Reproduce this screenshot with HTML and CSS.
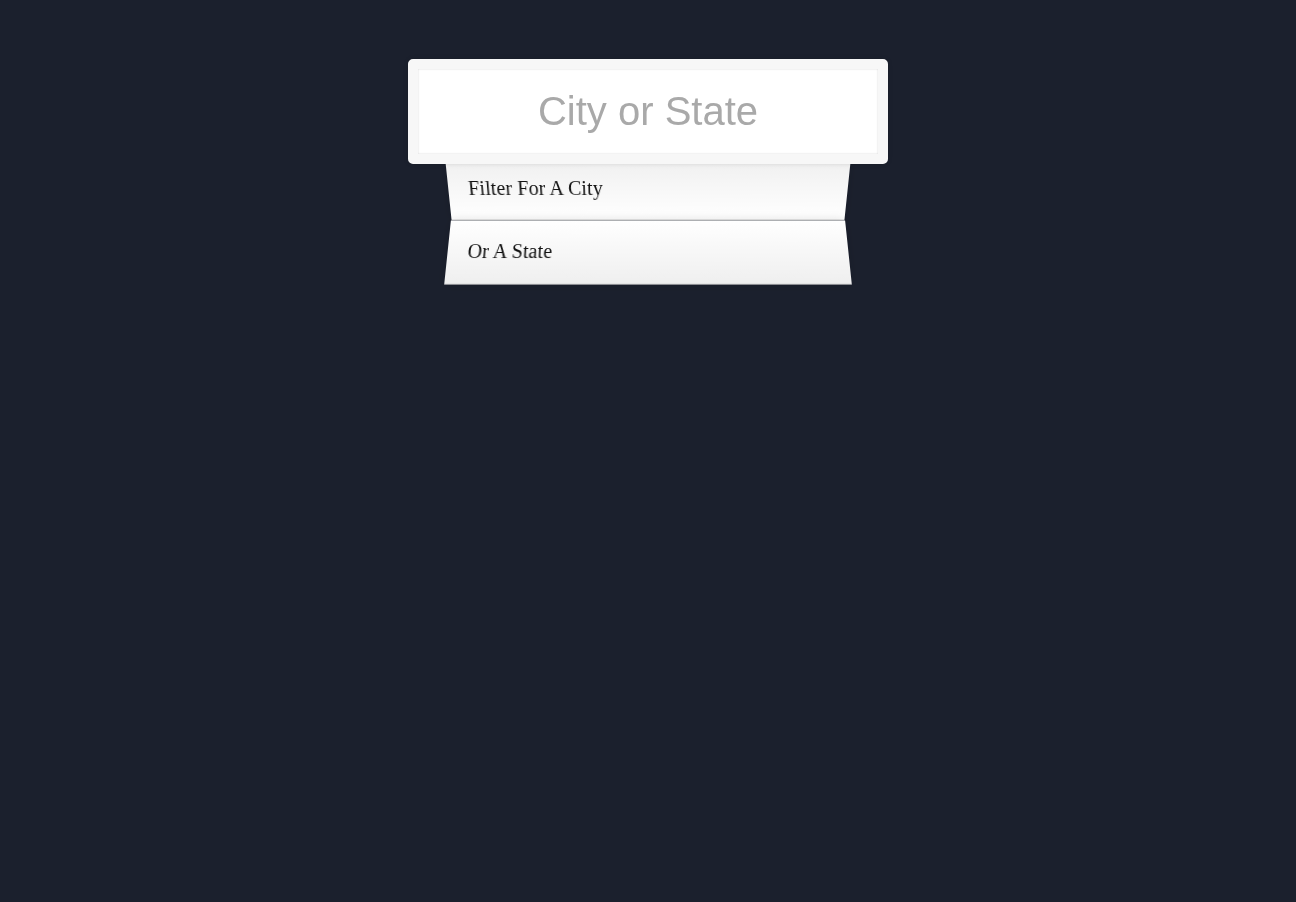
FILE: index.html
```html
<!DOCTYPE html>
<html lang="en">
<head>
<meta charset="UTF-8">
<title>Type Ahead</title>
<link rel="stylesheet" href="styles.css">
</head>
<body>
  <form class="search-form">
    <input type="text" class="search" placeholder="City or State">
    <ul class="suggestions">
      <li>Filter for a city</li>
      <li>or a state</li>
    </ul>
  </form>
</body>
</html>
```
FILE: styles.css
```css
html {
  box-sizing: border-box;
  background: #1b202d;
  font-family: "Liberation Serif", serif;
  font-size: 20px;
  font-weight: 200;
}
*, *:before, *:after {
  box-sizing: inherit;
}
body {
  margin: 8px;
}
.search-form {
  max-width: 400px;
  margin: 51px auto 50px;
}
.search {
  display: block;
  margin: 10px 0 -10px -40px;
  width: 480px;
  padding: 20px;
  text-align: center;
  outline: 0;
  border: 10px solid #F7F7F7;
  position: relative;
  z-index: 2;
  border-radius: 5px;
  font-family: "Liberation Sans", Arial, sans-serif;
  font-size: 40px;
  line-height: 45px;
  color: #333;
  background: #fff;
  box-shadow: 0 0 5px rgba(0, 0, 0, 0.12), inset 0 0 2px rgba(0, 0, 0, 0.19);
}
.search::placeholder {
  color: #a9a9a9;
}
.suggestions {
  margin: 0;
  padding: 0;
  position: relative;
}
.suggestions li {
  background: white;
  list-style: none;
  border-bottom: 1px solid #D8D8D8;
  box-shadow: 0 0 10px rgba(0, 0, 0, 0.14);
  margin: 0;
  padding: 20px;
  display: flex;
  justify-content: space-between;
  text-transform: capitalize;
  color: #111;
  line-height: 23px;
  letter-spacing: 0.12px;
}
.suggestions li:nth-child(even) {
  transform: perspective(100px) rotateX(3deg) translateY(2px) scale(1.001);
  background: linear-gradient(to bottom, #ffffff 0%, #EFEFEF 100%);
}
.suggestions li:nth-child(odd) {
  transform: perspective(100px) rotateX(-3deg) translateY(3px);
  background: linear-gradient(to top, #ffffff 0%, #EFEFEF 100%);
}
```
